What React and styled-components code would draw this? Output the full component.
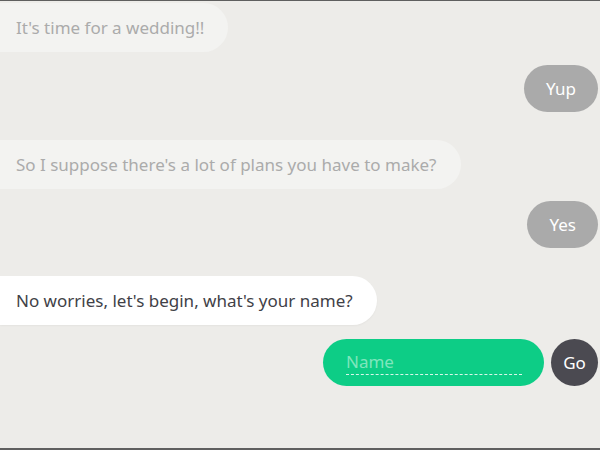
import React from 'react';
import styled, { createGlobalStyle } from 'styled-components';

const Global = createGlobalStyle`
  html, body {
    margin: 0;
    padding: 0;
    background: #edece9;
  }
  body {
    font-family: "Noto Sans", "Open Sans", sans-serif;
  }
`

const Screen = styled.div`
  width: 600px;
  height: 450px;
  box-sizing: border-box;
  border-top: 1px solid #5f5f5f;
  border-bottom: 2px solid #5f5f5f;
  background: #edece9;
  overflow: hidden;
  display: flex;
  flex-direction: column;
  padding-top: 2px;
`

const Row = styled.div`
  display: flex;
  justify-content: ${p => (p.$me ? 'flex-end' : 'flex-start')};
  align-items: center;
  gap: 7px;
  padding-right: 2px;
  margin-top: ${p => p.$gap}px;
`

const Bot = styled.div`
  height: 49px;
  display: flex;
  align-items: center;
  box-sizing: border-box;
  padding: 0 24px 0 16px;
  border-radius: 0 25px 25px 0;
  font-size: 17px;
  background: ${p => (p.$old ? '#f3f3f1' : '#ffffff')};
  color: ${p => (p.$old ? '#ababab' : '#414147')};
  box-shadow: ${p => (p.$old ? 'none' : '0 1px 2px rgba(0,0,0,0.04)')};
`

const Me = styled.div`
  height: 47px;
  display: flex;
  align-items: center;
  box-sizing: border-box;
  padding: 0 22px;
  border-radius: 24px;
  background: #aaaaaa;
  color: #ffffff;
  font-size: 17px;
`

const InputPill = styled.label`
  width: 221px;
  height: 47px;
  box-sizing: border-box;
  padding: 0 22px 0 23px;
  border-radius: 24px;
  background: #0dcd86;
  display: flex;
  align-items: center;
`

const Field = styled.input`
  width: 100%;
  border: none;
  border-bottom: 1px dashed #d8f7ea;
  background: transparent;
  outline: none;
  padding: 0 0 1px;
  font-family: "Noto Sans", "Open Sans", sans-serif;
  font-size: 17px;
  color: #ffffff;
  &::placeholder {
    color: #7fe6bd;
  }
`

const Go = styled.button`
  width: 47px;
  height: 47px;
  border-radius: 50%;
  border: none;
  background: #4b4a51;
  color: #ffffff;
  font-family: "Noto Sans", "Open Sans", sans-serif;
  font-size: 17px;
  padding: 0;
  cursor: pointer;
`

const messages = [
  { me: false, old: true, text: "It's time for a wedding!!", gap: 0 },
  { me: true, text: 'Yup', gap: 13 },
  { me: false, old: true, text: "So I suppose there's a lot of plans you have to make?", gap: 28 },
  { me: true, text: 'Yes', gap: 12 },
  { me: false, old: false, text: "No worries, let's begin, what's your name?", gap: 28 },
]

export default function App() {
  return (
    <Screen>
      <Global />
      {messages.map((m, i) => (
        <Row key={i} $me={m.me} $gap={m.gap}>
          {m.me ? <Me>{m.text}</Me> : <Bot $old={m.old}>{m.text}</Bot>}
        </Row>
      ))}
      <Row $me $gap={14}>
        <InputPill>
          <Field placeholder="Name" />
        </InputPill>
        <Go>Go</Go>
      </Row>
    </Screen>
  );
}
